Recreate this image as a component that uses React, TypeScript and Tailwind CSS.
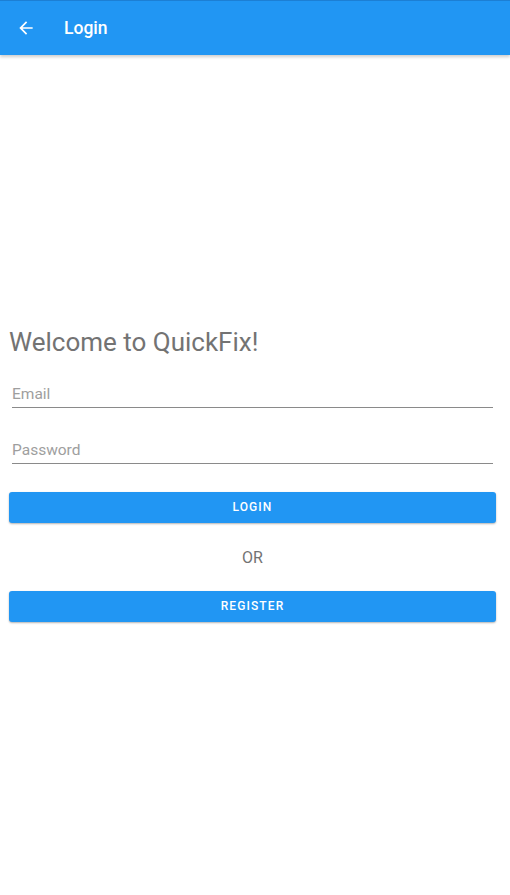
export default function App() {
  return (
    <div className="flex h-[895px] w-[510px] flex-col bg-white" style={{ fontFamily: 'Roboto, "Liberation Sans", sans-serif' }}>
      <header className="relative z-10 flex h-[55px] shrink-0 items-center border-t border-[#1c7fd4] bg-[#2196f3] shadow-[0_2px_3px_rgba(0,0,0,0.2)]">
        <svg className="ml-[16px] h-[20px] w-[20px]" viewBox="0 0 24 24" fill="#fff">
          <path d="M20 11H7.83l5.59-5.59L12 4l-8 8 8 8 1.41-1.41L7.83 13H20v-2z" />
        </svg>
        <span className="ml-[28px] text-[17.5px] font-medium text-white">Login</span>
      </header>
      <main className="flex flex-1 flex-col justify-center px-[9px] pb-[2px]">
        <h1 className="text-[26px] leading-[30px] text-[#737373]">Welcome to QuickFix!</h1>
        <div className="mt-[27px] ml-[3px] mr-[8px] border-b border-[#8a8a8a] pb-[3px] text-[15.5px] leading-[20px] text-[#9e9e9e]">
          Email
        </div>
        <div className="mt-[32px] ml-[3px] mr-[8px] border-b border-[#8a8a8a] pb-[3px] text-[15.5px] leading-[20px] text-[#9e9e9e]">
          Password
        </div>
        <button className="mt-[28px] mr-[5px] h-[31px] rounded-[3px] bg-[#2196f3] text-[12px] font-medium tracking-[1.1px] text-white shadow-[0_1px_2px_rgba(0,0,0,0.3)]">
          LOGIN
        </button>
        <div className="mt-[25px] mr-[5px] text-center text-[16px] leading-[20px] text-[#737373]">OR</div>
        <button className="mt-[23px] mr-[5px] h-[31px] rounded-[3px] bg-[#2196f3] text-[12px] font-medium tracking-[1.1px] text-white shadow-[0_1px_2px_rgba(0,0,0,0.3)]">
          REGISTER
        </button>
      </main>
    </div>
  )
}
